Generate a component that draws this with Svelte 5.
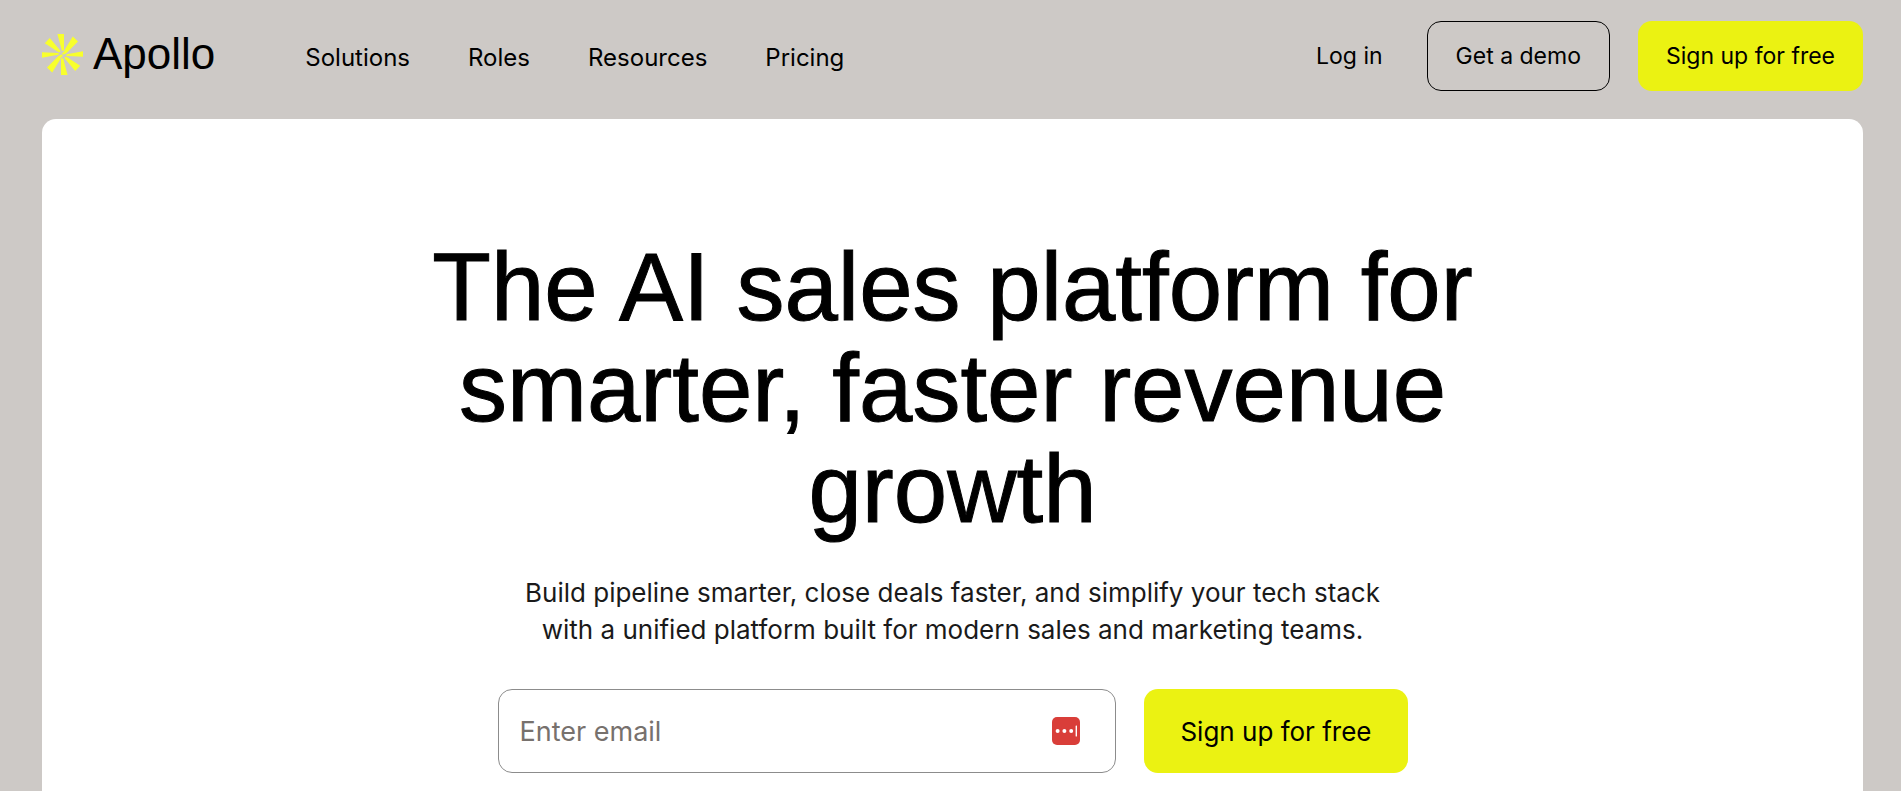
<script lang="ts">
  const links = ["Solutions", "Roles", "Resources", "Pricing"];

  let email = $state("");
</script>

<div class="page">
  <header class="header">
    <a class="brand" href="#home" aria-label="Apollo home">
      <svg class="mark" viewBox="0 0 41 41" aria-hidden="true">
        <g id="half">
          <path d="M15.4 0H22V15.4Q21.6 18 19.8 16.2Z" />
          <path d="M30.8 2.6 36 7.6 24.6 18.9Q22.4 21 20.5 20.5V18.6Q22.6 18.2 22.8 15.6Z" />
          <path d="M41 17.2V22.7L25.6 22Q22.6 21.6 25 20.2Z" />
          <path d="M38.2 31.8 33.2 37 22.8 24.4Q22 22 24.8 23Z" />
        </g>
        <use href="#half" transform="rotate(180 20.5 20.5)" />
      </svg>
      <span>Apollo</span>
    </a>

    <nav class="nav" aria-label="Main">
      {#each links as link}
        <a href="#{link.toLowerCase()}">{link}</a>
      {/each}
    </nav>

    <div class="actions">
      <a class="login" href="#login">Log in</a>
      <button class="btn outline" type="button">Get a demo</button>
      <button class="btn" type="button">Sign up for free</button>
    </div>
  </header>

  <main class="card">
    <h1>The AI sales platform for smarter, faster revenue growth</h1>
    <p>
      Build pipeline smarter, close deals faster, and simplify your tech stack with a unified
      platform built for modern sales and marketing teams.
    </p>

    <form class="signup" onsubmit={(e) => e.preventDefault()}>
      <div class="field">
        <input type="email" aria-label="Email" placeholder="Enter email" bind:value={email} />
        <button class="fill" type="button" aria-label="Fill from password manager">
          <svg viewBox="0 0 28 28" aria-hidden="true">
            <rect width="28" height="28" rx="5" fill="#d93e39" />
            <circle cx="5.6" cy="14" r="2" />
            <circle cx="12.4" cy="14" r="2" />
            <circle cx="19.2" cy="14" r="2" />
            <rect x="23.6" y="8.5" width="1.4" height="11" rx=".5" />
          </svg>
        </button>
      </div>
      <button class="btn large" type="submit">Sign up for free</button>
    </form>
  </main>
</div>

<style>
  :global(body) {
    margin: 0;
    background: #cdc9c6;
  }

  .page {
    box-sizing: border-box;
    display: flex;
    flex-direction: column;
    min-height: 100vh;
    padding: 0 38px 0 42px;
    background: #cdc9c6;
    color: #000;
    font-family: Inter, "Liberation Sans", sans-serif;
    font-size: 24px;
  }

  a {
    color: inherit;
    text-decoration: none;
  }

  .header {
    display: flex;
    align-items: center;
    padding: 21px 0 28px;
  }

  .brand {
    display: flex;
    align-items: center;
    gap: 10px;
    margin-right: 90px;
    padding-bottom: 4px;
    font-family: "Liberation Sans", Arial, sans-serif;
    font-size: 44px;
    line-height: 48px;
  }

  .mark {
    width: 41px;
    height: 41px;
    fill: #f8ff2c;
  }

  .nav {
    display: flex;
    gap: 58px;
    padding-top: 2px;
  }

  .actions {
    display: flex;
    align-items: center;
    gap: 28px;
    margin-left: auto;
    font-size: 23px;
  }

  .login {
    margin-right: 16px;
  }

  .btn {
    box-sizing: border-box;
    height: 70px;
    padding: 0 28px;
    border: 0;
    border-radius: 14px;
    background: #ebf212;
    color: #000;
    font: inherit;
    white-space: nowrap;
    cursor: pointer;
  }

  .outline {
    border: 1px solid #000;
    background: transparent;
  }

  .large {
    height: 84px;
    padding: 0 36px;
    font-size: 26px;
  }

  .card {
    display: flex;
    flex: 1;
    flex-direction: column;
    align-items: center;
    padding-top: 117px;
    border-radius: 14px 14px 0 0;
    background: #fff;
  }

  h1 {
    max-width: 1100px;
    margin: 0;
    font-family: "Liberation Sans", Arial, sans-serif;
    font-size: 96px;
    font-weight: 400;
    line-height: 101px;
    text-align: center;
    -webkit-text-stroke: 1px #000;
  }

  p {
    max-width: 900px;
    margin: 35px 0 41px;
    color: #1a1a1a;
    font-size: 26px;
    line-height: 37px;
    text-align: center;
  }

  .signup {
    display: flex;
    gap: 28px;
    width: 100%;
    max-width: 910px;
  }

  .field {
    box-sizing: border-box;
    display: flex;
    flex: 1;
    align-items: center;
    height: 84px;
    padding: 0 35px 0 21px;
    border: 1px solid #8c8c8c;
    border-radius: 14px;
  }

  input {
    flex: 1;
    min-width: 0;
    padding: 0;
    border: 0;
    outline: 0;
    background: none;
    font: inherit;
    font-size: 27px;
  }

  input::placeholder {
    color: #77716d;
    opacity: 1;
  }

  .fill {
    width: 28px;
    height: 28px;
    padding: 0;
    border: 0;
    background: none;
    cursor: pointer;
  }

  .fill svg {
    display: block;
    fill: #fff;
  }
</style>
